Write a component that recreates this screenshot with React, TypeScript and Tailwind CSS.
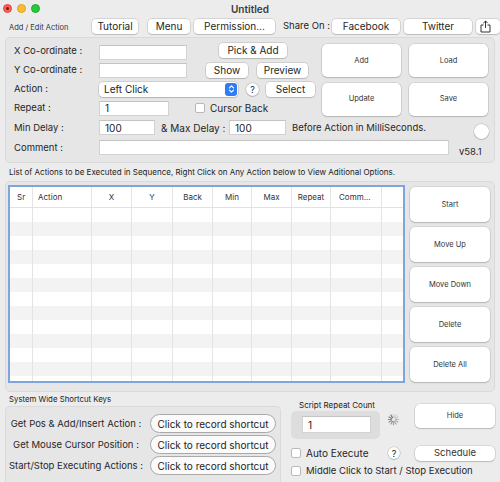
import React from "react";

const font = { fontFamily: "Inter, 'Noto Sans', sans-serif" };

const btn =
  "bg-white rounded-[4px] shadow-[0_0_0_0.5px_rgba(0,0,0,0.2),0_1px_1px_rgba(0,0,0,0.12)] flex items-center justify-center text-[10px] text-[#262626] leading-none shrink-0 whitespace-nowrap";
const bigBtn =
  "bg-white rounded-[5px] shadow-[0_0_0_0.5px_rgba(0,0,0,0.16),0_1px_1.5px_rgba(0,0,0,0.14)] flex items-center justify-center text-[7.5px] text-[#333] leading-none shrink-0";
const input =
  "bg-white border border-[#d2d2d2] border-t-[#c4c4c4] h-[15px] text-[10px] text-[#222] px-[5px] flex items-center leading-none shrink-0";
const label = "w-[85px] text-[9.5px] text-[#262626] leading-none shrink-0 whitespace-nowrap";

function Checkbox() {
  return <div className="w-[10px] h-[10px] bg-white rounded-[2px] border border-[#b9b9b9] shrink-0" />;
}

function Help({ size = "w-[13px] h-[13px]" }: { size?: string }) {
  return (
    <div
      className={`${size} rounded-full bg-white shadow-[0_0_0_0.5px_rgba(0,0,0,0.2),0_1px_1px_rgba(0,0,0,0.15)] flex items-center justify-center text-[9px] text-[#222] leading-none shrink-0`}
    >
      ?
    </div>
  );
}

function Spinner() {
  const lines = Array.from({ length: 12 }, (_, i) => i);
  return (
    <svg width="13" height="13" viewBox="0 0 24 24" className="shrink-0">
      {lines.map((i) => (
        <line
          key={i}
          x1="12"
          y1="2.5"
          x2="12"
          y2="8"
          stroke="#6e6e6e"
          strokeWidth="2.2"
          strokeLinecap="round"
          opacity={0.2 + (i / 12) * 0.8}
          transform={`rotate(${i * 30} 12 12)`}
        />
      ))}
    </svg>
  );
}

const colW = [
  "w-[23px]",
  "w-[59px]",
  "w-[40px]",
  "w-[41px]",
  "w-[40px]",
  "w-[39px]",
  "w-[40px]",
  "w-[39px]",
  "w-[51px]",
  "w-[21px]",
];
const headers: { t: string; c: string }[] = [
  { t: "Sr", c: "justify-start pl-[7px]" },
  { t: "Action", c: "justify-start pl-[5px]" },
  { t: "X", c: "justify-center" },
  { t: "Y", c: "justify-center" },
  { t: "Back", c: "justify-center" },
  { t: "Min", c: "justify-center" },
  { t: "Max", c: "justify-center" },
  { t: "Repeat", c: "justify-center" },
  { t: "Comm...", c: "justify-start pl-[8px]" },
  { t: "", c: "" },
];

function Table() {
  const rows = Array.from({ length: 13 }, (_, i) => i);
  return (
    <div className="w-[397px] h-[198px] border-2 border-[#7ea6dc] bg-white overflow-hidden shrink-0">
      <div className="flex h-[21px] border-b border-[#e2e2e2] bg-white">
        {headers.map((h, i) => (
          <div
            key={i}
            className={`${colW[i]} h-full flex items-center text-[8px] text-[#333] ${h.c} ${
              i < 9 ? "border-r border-[#e4e4e4]" : ""
            }`}
          >
            {h.t}
          </div>
        ))}
      </div>
      {rows.map((r) => (
        <div key={r} className={`flex h-[14px] ${r % 2 === 0 ? "bg-white" : "bg-[#f3f3f3]"}`}>
          {colW.map((w, i) => (
            <div key={i} className={`${w} h-full ${i < 9 ? "border-r border-[#e4e4e4]" : ""}`} />
          ))}
        </div>
      ))}
    </div>
  );
}

function ShareIcon() {
  return (
    <svg width="11" height="13" viewBox="0 0 11 13" fill="none" stroke="#333" strokeWidth="1">
      <path d="M3.5 5 H1 V12 H10 V5 H7.5" />
      <path d="M5.5 8 V1 M3.3 3.2 L5.5 1 L7.7 3.2" />
    </svg>
  );
}

export default function App() {
  return (
    <div className="w-[500px] h-[482px] bg-[#ececec] overflow-hidden flex flex-col text-[#262626]" style={font}>
      {/* title bar */}
      <div className="h-[17px] grid grid-cols-[1fr_auto_1fr] items-center shrink-0">
        <div className="flex items-center gap-[5px] pl-[3px]">
          <div className="w-[9px] h-[9px] rounded-full bg-[#fe5f57] border border-[#e2463f] flex items-center justify-center">
            <div className="w-[3px] h-[3px] rounded-full bg-[#7a1a14]" />
          </div>
          <div className="w-[9px] h-[9px] rounded-full bg-[#febc2e] border border-[#dea123]" />
          <div className="w-[9px] h-[9px] rounded-full bg-[#28c840] border border-[#1aab29]" />
        </div>
        <div className="text-[10px] font-semibold text-[#3b3b3b] leading-none">Untitled</div>
        <div />
      </div>

      {/* top toolbar row */}
      <div className="h-[18px] flex items-center pl-[9px] shrink-0">
        <div className="w-[88px] text-[7.5px] text-[#333] leading-none mt-[3px] whitespace-nowrap">Add / Edit Action</div>
        <div className={`${btn} w-[46px] h-[15px]`}>Tutorial</div>
        <div className={`${btn} w-[42px] h-[15px] ml-[10px]`}>Menu</div>
        <div className={`${btn} w-[81px] h-[15px] ml-[4px]`}>Permission...</div>
        <div className="text-[9.5px] leading-none ml-[8px] w-[49px] whitespace-nowrap shrink-0">Share On :</div>
        <div className={`${btn} w-[68px] h-[15px]`}>Facebook</div>
        <div className={`${btn} w-[68px] h-[15px] ml-[4px]`}>Twitter</div>
        <div className={`${btn} w-[24px] h-[15px] ml-[4px] justify-start pl-[4px]`}>
          <ShareIcon />
        </div>
      </div>

      {/* Add / Edit panel */}
      <div className="mx-[5px] mt-[2px] h-[126px] box-border border border-[#dadada] rounded-[5px] bg-[#e6e6e6] flex flex-col shrink-0">
        <div className="flex pt-[5px]">
          <div className="w-[316px] pl-[8px] flex flex-col gap-[3px] shrink-0">
            <div className="h-[16px] flex items-center">
              <div className={label}>X Co-ordinate :</div>
              <div className={`${input} w-[88px] mt-[2px]`} />
              <div className={`${btn} w-[68px] h-[15px] ml-[32px] -mt-[2px]`}>Pick &amp; Add</div>
            </div>
            <div className="h-[16px] flex items-center">
              <div className={label}>Y Co-ordinate :</div>
              <div className={`${input} w-[88px]`} />
              <div className={`${btn} w-[42px] h-[15px] ml-[19px]`}>Show</div>
              <div className={`${btn} w-[51px] h-[15px] ml-[9px]`}>Preview</div>
            </div>
            <div className="h-[16px] flex items-center">
              <div className={label}>Action :</div>
              <div className="w-[139px] h-[15px] bg-white rounded-[4px] shadow-[0_0_0_0.5px_rgba(0,0,0,0.2),0_1px_1px_rgba(0,0,0,0.12)] flex items-center justify-between pl-[5px] pr-[1px] shrink-0">
                <span className="text-[10px] leading-none text-[#222]">Left Click</span>
                <div className="w-[12px] h-[13px] rounded-[3px] bg-[#2f7cf6] flex items-center justify-center">
                  <svg width="7" height="10" viewBox="0 0 7 10" fill="none" stroke="white" strokeWidth="1.2" strokeLinecap="round" strokeLinejoin="round">
                    <path d="M1.5 3.8 L3.5 1.8 L5.5 3.8" />
                    <path d="M1.5 6.2 L3.5 8.2 L5.5 6.2" />
                  </svg>
                </div>
              </div>
              <div className="ml-[8px]">
                <Help />
              </div>
              <div className={`${btn} w-[49px] h-[15px] ml-[7px]`}>Select</div>
            </div>
            <div className="h-[16px] flex items-center">
              <div className={label}>Repeat :</div>
              <div className={`${input} w-[70px]`}>1</div>
              <div className="ml-[26px]">
                <Checkbox />
              </div>
              <div className="ml-[5px] text-[10px] leading-none">Cursor Back</div>
            </div>
          </div>
          <div className="w-[166px] grid grid-cols-2 gap-x-[8px] gap-y-[5px] mt-[1px] shrink-0">
            <div className={`${bigBtn} h-[33px]`}>Add</div>
            <div className={`${bigBtn} h-[33px]`}>Load</div>
            <div className={`${bigBtn} h-[33px]`}>Update</div>
            <div className={`${bigBtn} h-[33px]`}>Save</div>
          </div>
        </div>

        <div className="flex items-start pl-[8px] pr-[5px] mt-[4px]">
          <div className={`${label} h-[15px] flex items-center`}>Min Delay :</div>
          <div className={`${input} w-[56px]`}>100</div>
          <div className="w-[68px] ml-[6px] h-[15px] flex items-center text-[10px] leading-none whitespace-nowrap">&amp; Max Delay :</div>
          <div className={`${input} w-[57px]`}>100</div>
          <div className="ml-[6px] h-[15px] flex items-center text-[9.5px] leading-none whitespace-nowrap">Before Action in MilliSeconds.</div>
          <div className="ml-auto mt-[4px] w-[15px] h-[15px] rounded-full bg-white shadow-[0_0_0_0.5px_rgba(0,0,0,0.2),0_1px_1px_rgba(0,0,0,0.12)]" />
        </div>

        <div className="flex items-start pl-[8px] mt-[1px]">
          <div className={`${label} h-[15px] flex items-center`}>Comment :</div>
          <div className={`${input} w-[350px]`} />
          <div className="ml-[10px] mt-[7px] text-[9.5px] leading-none">v58.1</div>
        </div>
      </div>

      {/* list caption */}
      <div className="h-[18px] flex items-center pl-[9px] text-[8px] text-[#222] leading-none shrink-0 whitespace-nowrap">
        List of Actions to be Executed in Sequence, Right Click on Any Action below to View Aditional Options.
      </div>

      {/* table panel */}
      <div className="mx-[5px] h-[211px] box-border border border-[#dadada] rounded-[5px] bg-[#e6e6e6] flex pt-[3px] pl-[2px] shrink-0">
        <Table />
        <div className="ml-[5px] pt-[2px] flex flex-col gap-[5px]">
          <div className={`${bigBtn} w-[80px] h-[35px]`}>Start</div>
          <div className={`${bigBtn} w-[80px] h-[35px]`}>Move Up</div>
          <div className={`${bigBtn} w-[80px] h-[35px]`}>Move Down</div>
          <div className={`${bigBtn} w-[80px] h-[35px]`}>Delete</div>
          <div className={`${bigBtn} w-[80px] h-[35px]`}>Delete All</div>
        </div>
      </div>

      {/* bottom */}
      <div className="flex flex-1 min-h-0">
        <div className="w-[281px] pl-[5px] flex flex-col shrink-0">
          <div className="h-[14px] flex items-center pl-[4px] pt-[2px] text-[7.8px] text-[#222] leading-none whitespace-nowrap">
            System Wide Shortcut Keys
          </div>
          <div className="flex-1 border border-[#dadada] border-b-0 rounded-t-[5px] bg-[#e6e6e6] pt-[7px] pl-[2px] flex flex-col gap-[2px]">
            {[
              "Get Pos & Add/Insert Action :",
              "Get Mouse Cursor Position :",
              "Start/Stop Executing Actions :",
            ].map((t) => (
              <div key={t} className="flex items-center h-[19px]">
                <div className="w-[136px] text-center text-[9.5px] leading-none whitespace-nowrap">{t}</div>
                <div className="ml-[6px] w-[126px] h-[19px] rounded-[10px] border border-[#a9a9a9] bg-[#fbfbfb] flex items-center justify-center text-[10px] leading-none text-[#222] whitespace-nowrap">
                  Click to record shortcut
                </div>
              </div>
            ))}
          </div>
        </div>

        <div className="flex-1 flex flex-col">
          <div className="flex h-[48px]">
            <div className="w-[134px] flex flex-col shrink-0">
              <div className="pt-[7px] pl-[18px] text-[8px] leading-[12px] text-[#222] whitespace-nowrap">Script Repeat Count</div>
              <div className="flex items-start pl-[10px]">
                <div className="w-[89px] h-[28px] rounded-[5px] bg-[#dddddd] pt-[5px] pl-[11px]">
                  <div className={`${input} w-[69px] h-[17px]`}>1</div>
                </div>
                <div className="ml-[7px] mt-[2px]">
                  <Spinner />
                </div>
              </div>
            </div>
            <div className={`${bigBtn} w-[80px] h-[24px] mt-[12px]`}>Hide</div>
          </div>

          <div className="flex items-center h-[16px] mt-[5px]">
            <div className="w-[107px] pl-[10px] flex items-center shrink-0">
              <Checkbox />
              <div className="ml-[5px] text-[10px] leading-none">Auto Execute</div>
            </div>
            <Help size="w-[12px] h-[12px]" />
            <div className={`${bigBtn} w-[80px] h-[15px] ml-[15px] text-[9.5px]`}>Schedule</div>
          </div>

          <div className="flex items-center h-[12px] mt-[4px] pl-[10px]">
            <Checkbox />
            <div className="ml-[5px] text-[9.5px] leading-none whitespace-nowrap">
              Middle Click to Start / Stop Execution
            </div>
          </div>
        </div>
      </div>
    </div>
  );
}
